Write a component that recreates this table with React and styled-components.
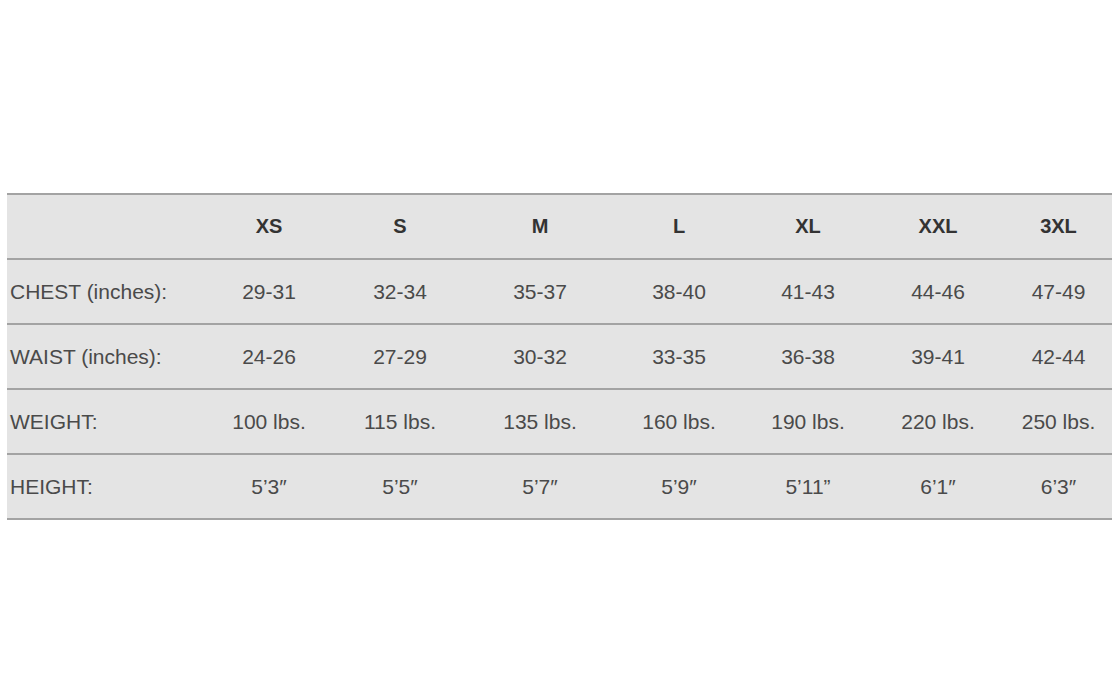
import React from 'react';
import styled, { createGlobalStyle } from 'styled-components';

const GlobalStyle = createGlobalStyle`
  html, body {
    margin: 0;
    padding: 0;
    background: #ffffff;
  }
`;

const Page = styled.div`
  width: 1120px;
  height: 700px;
  padding: 193px 0 0 7px;
  box-sizing: border-box;
  font-family: "Liberation Sans", Arial, sans-serif;
`;

const Table = styled.table`
  width: 1105px;
  table-layout: fixed;
  border-collapse: collapse;
  background: #e4e4e4;
  border-top: 2px solid #a3a3a3;
`;

const Row = styled.tr`
  height: 65px;
  border-bottom: 2px solid #a3a3a3;
`;

const HeadCell = styled.th`
  padding: 0;
  text-align: center;
  font-size: 20px;
  font-weight: bold;
  color: #333333;
`;

const Label = styled.td`
  padding: 0 0 0 3px;
  text-align: left;
  font-size: 21px;
  color: #4a4a4a;
`;

const Cell = styled.td`
  padding: 0;
  text-align: center;
  font-size: 21px;
  color: #4a4a4a;
`;

const widths = [198, 128, 134, 146, 132, 126, 134, 107];
const sizes = ['XS', 'S', 'M', 'L', 'XL', 'XXL', '3XL'];

const rows = [
  { label: 'CHEST (inches):', values: ['29-31', '32-34', '35-37', '38-40', '41-43', '44-46', '47-49'] },
  { label: 'WAIST (inches):', values: ['24-26', '27-29', '30-32', '33-35', '36-38', '39-41', '42-44'] },
  { label: 'WEIGHT:', values: ['100 lbs.', '115 lbs.', '135 lbs.', '160 lbs.', '190 lbs.', '220 lbs.', '250 lbs.'] },
  { label: 'HEIGHT:', values: ['5\u20193\u2033', '5\u20195\u2033', '5\u20197\u2033', '5\u20199\u2033', '5\u201911\u201d', '6\u20191\u2033', '6\u20193\u2033'] },
];

export default function App() {
  return (
    <>
      <GlobalStyle />
      <Page>
        <Table>
          <colgroup>
            {widths.map((w, i) => <col key={i} style={{ width: w }} />)}
          </colgroup>
          <thead>
            <Row>
              <HeadCell />
              {sizes.map(s => <HeadCell key={s}>{s}</HeadCell>)}
            </Row>
          </thead>
          <tbody>
            {rows.map(r => (
              <Row key={r.label}>
                <Label>{r.label}</Label>
                {r.values.map((v, i) => <Cell key={i}>{v}</Cell>)}
              </Row>
            ))}
          </tbody>
        </Table>
      </Page>
    </>
  );
}
